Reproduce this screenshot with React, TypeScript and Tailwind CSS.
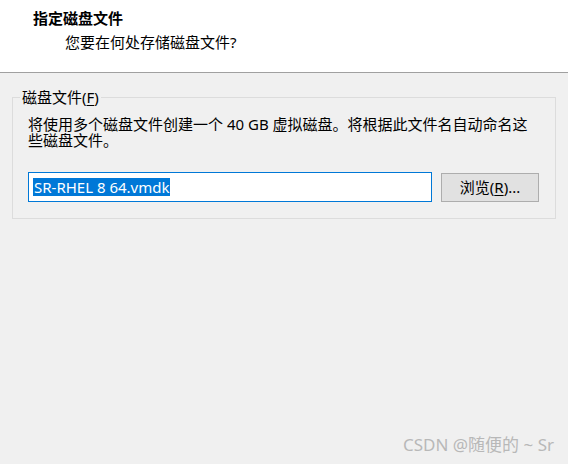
export default function App() {
  return (
    <div className="relative w-[568px] h-[464px] bg-[#f0f0f0] flex flex-col text-black font-['Noto_Sans','Noto_Sans_CJK_SC',sans-serif] text-[15px] leading-[16px]">
      {/* 头部 */}
      <div className="h-[73px] bg-white border-b border-[#a0a0a0] pl-[33px] pt-[9px]">
        <div className="font-bold leading-[18px]">指定磁盘文件</div>
        <div className="ml-[32px] mt-[6px] leading-[18px]">您要在何处存储磁盘文件?</div>
      </div>

      {/* 磁盘文件 */}
      <div className="px-[12px] pt-[16px]">
        <fieldset className="border border-[#dcdcdc] pl-[15px] pr-[16px] pb-[16px]">
          <legend className="-ml-[8px] px-[2px] leading-[16px]">
            磁盘文件(<span className="underline underline-offset-2">F</span>)
          </legend>
          <p className="mt-[11px] leading-[16px]">
            将使用多个磁盘文件创建一个 40 GB 虚拟磁盘。将根据此文件名自动命名这些磁盘文件。
          </p>
          <div className="mt-[24px] flex items-center gap-[9px]">
            <div className="w-[404px] h-[30px] bg-white border border-[#0078d7] flex items-center pl-[4px]">
              <span className="bg-[#0078d7] text-white leading-[18px] px-[1px]">SR-RHEL 8 64.vmdk</span>
            </div>
            <button className="w-[98px] h-[29px] bg-[#e1e1e1] border border-[#adadad] flex items-center justify-center">
              浏览(<span className="underline underline-offset-2">R</span>)...
            </button>
          </div>
        </fieldset>
      </div>

      {/* 水印 */}
      <div className="absolute right-[14px] bottom-[9px] text-[#b8b8b8] text-[17px] leading-[20px]">
        CSDN @随便的 ~ Sr
      </div>
    </div>
  );
}
